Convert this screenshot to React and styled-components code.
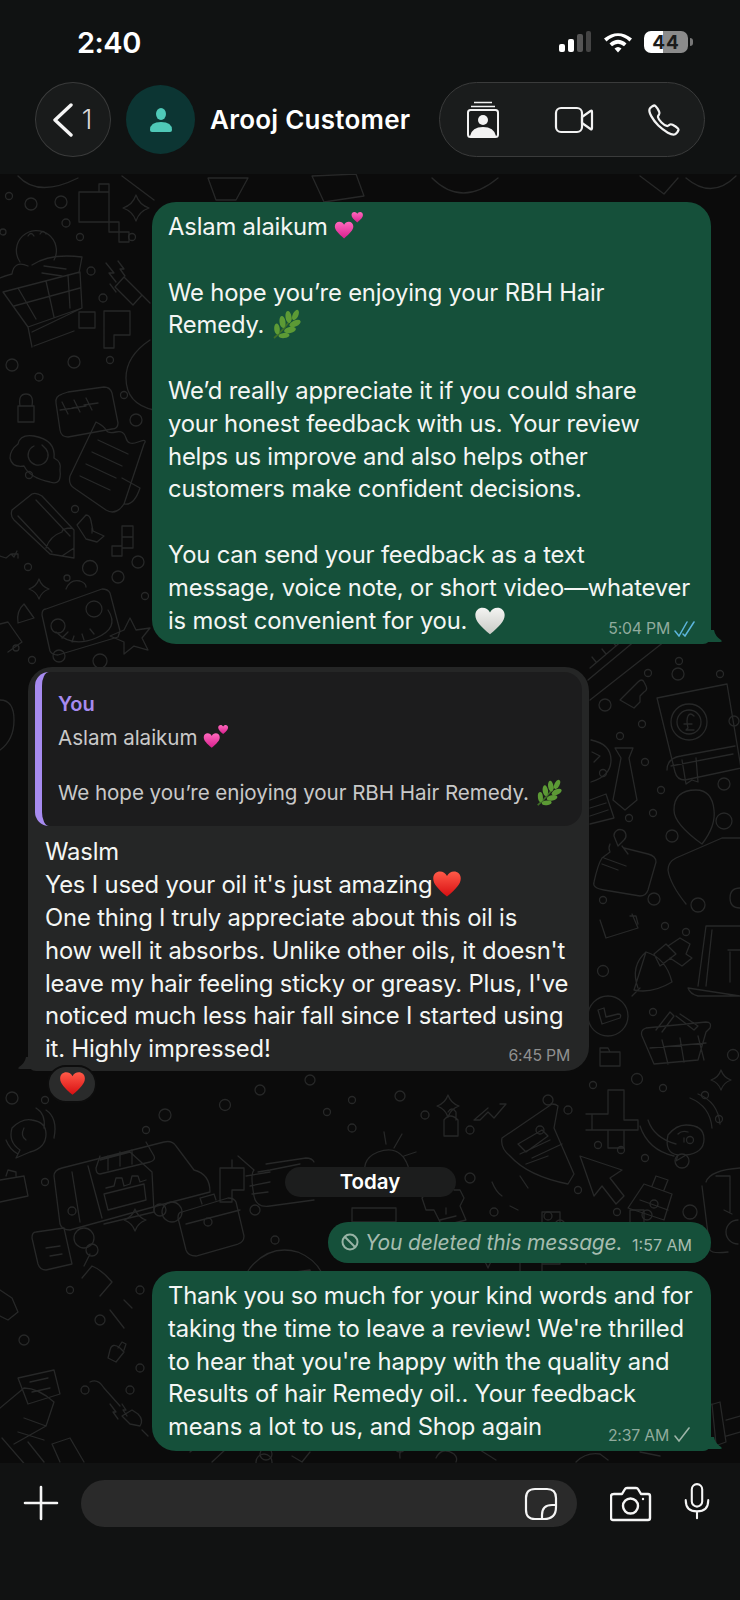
import React from 'react';
import styled, { createGlobalStyle } from 'styled-components';
import { IoCallOutline } from 'react-icons/io5';

const GlobalStyle = createGlobalStyle`
  html, body {
    margin: 0;
    padding: 0;
    background: #0b0b0b;
  }
  * {
    box-sizing: border-box;
  }
`;

const FONT = `Inter, "Liberation Sans", sans-serif`;

const FIRST_MESSAGE = [
  ['Aslam alaikum ', 'hearts'],
  [''],
  ['We hope you’re enjoying your RBH Hair'],
  ['Remedy. ', 'herb'],
  [''],
  ['We’d really appreciate it if you could share'],
  ['your honest feedback with us. Your review'],
  ['helps us improve and also helps other'],
  ['customers make confident decisions.'],
  [''],
  ['You can send your feedback as a text'],
  ['message, voice note, or short video—whatever'],
  ['is most convenient for you. ', 'white'],
];

const REPLY = [
  ['Waslm'],
  ["Yes I used your oil it's just amazing", 'red'],
  ['One thing I truly appreciate about this oil is'],
  ["how well it absorbs. Unlike other oils, it doesn't"],
  ["leave my hair feeling sticky or greasy. Plus, I've"],
  ['noticed much less hair fall since I started using'],
  ['it. Highly impressed!'],
];

const THANKS = [
  ['Thank you so much for your kind words and for'],
  ["taking the time to leave a review! We're thrilled"],
  ["to hear that you're happy with the quality and"],
  ['Results of hair Remedy oil.. Your feedback'],
  ['means a lot to us, and Shop again'],
];

// wallpaper, in page coordinates
const star = (x, y, r) =>
  `M${x} ${y - r}Q${x + r * 0.25} ${y - r * 0.25} ${x + r} ${y}Q${x + r * 0.25} ${y + r * 0.25} ${x} ${y + r}Q${x - r * 0.25} ${y + r * 0.25} ${x - r} ${y}Q${x - r * 0.25} ${y - r * 0.25} ${x} ${y - r}Z`;

const DOODLES = [
  // top strip
  'M18 176q20 22 60 2M122 176l32 24M208 178h40l-12 22h-20zM312 176l44 -2 8 22-40 6zM432 178q30 30 66 0M640 176l24 18 14-16M686 178q26 22 50-2',
  // cart and smiley
  'M20 262a20 20 0 1 1 34 -2M28 236q3-5 6 0M40 234q3-5 6 0M3 292L80 272l2 36-54 19zM18 288l18 31M46 281l8 36M68 275l2 33M14 306l66-18M28 327l4 20M82 308l-50 24M34 346l40-15',
  'M32 265q18-12 50-8l-3 16M44 266l22 3M42 273l20 3M28 266q-14-6-16 8q-8 2-12 4',
  // tokens around the cart
  'M106 263l8 10-5 0 7 9M118 261l6 8-4 0 5 7M110 284l6 8M124 277l18 18-9 10-18-18zM142 295l8 8',
  'M79 312h16v16h-16zM104 311h26v24h-16v13h-10z',
  'M79 192h30v30h-30zM109 192h-10v-8h10zM109 222h10v10h-10zM109 232h10v10h10v-10h-10z',
  star(136, 208, 13),
  'M150 340q-24 16-24 38q0 26 28 32',
  // password
  'M68 392l36-5q6 0 8 6l6 30q0 6-6 6l-44 8q-7 0-8-7l-4-27q-1-7 6-9z',
  'M62 402l6 12M74 400l6 12M86 398l6 12M60 410l14-2M72 408l14-2M84 405l14-2',
  'M18 406h16v16h-16zM20 406q-2-12 6-12t6 12',
  // cloud and receipt
  'M18 444q-8 6-8 14q2 10 14 8q6 12 26 16q12 4 10-12q2-8-6-12q2-18-20-22q-14-2-16 8z',
  'M34 446a10 10 0 1 0 12 3l-4-4',
  'M96 422q8 4 10 8t10 2 10 6 12 4 6 2L124 504q-8 12-18 6L74 488q-6-4-4-12zM98 440l30 14M92 452l30 14M86 464l30 14M80 476l30 14M124 504q10 2 16-16l-18-10',
  // pencil
  'M12 510l20-16q4-2 10 2l32 34 0 28-24-4-36-34q-4-4-2-10zM18 516l34 36M36 500l34 36M46 548q4-12 16-16 0-4 10-4M62 556l12-8',
  'M86 515q4 0 5 6l2 10 11 5-7 6-11-3-9-14zM92 528l0 5',
  'M122 526h11v11h-11zM122 537h11v11h-11zM112 546h10v10h-10z',
  'M0 556l6 2 5-4 3 3 3-6M12 554h6v4',
  star(39, 589, 10),
  'M24 604l10 14-16 5q-2-12 6-19z',
  // robot
  'M46 609l56-20q6 0 8 4l10 38-2 6-60 18q-6 0-8-4l-8-36q0-6 4-6zM66 589q4-10 14-8q6 2 6 6',
  'M58 626m-7 0a7 7 0 1 0 14 0a7 7 0 1 0-14 0M94 609m-8 0a8 8 0 1 0 16 0a8 8 0 1 0-16 0M56 632q16 16 40 6t12-28M62 638l6-6M72 642l2-6M84 640l-2-6M94 634l-4-5',
  'M130 618l6 12 14-2-8 10 6 12-14-4-10 8 0-12-14-6 14-6z',
  // lower-left edge
  'M0 624l8-2 14 20-14 10M0 700q14 0 14 20t-14 30',
  // ruler and diagonal
  'M590 668l40-34M588 680l60-50M596 662l-4-5M606 654l-4-5M616 646l-4-5M626 638l-4-5M590 700l84-66',
  'M630 690l8-8q4-4 6 0l2 4q2 4-2 6l-4 4 0 6-6 6-14-8 6-6z',
  // book
  'M657 698l70-14 14 84-56 12q-8 0-10-8zM667 770q0-12 14-14l54-10M671 766l62-12M682 760l4 24 6-4 6 2-2-24',
  'M689 722m-18 0a18 18 0 1 0 36 0a18 18 0 1 0-36 0M689 722m-12 0a12 12 0 1 0 24 0a12 12 0 1 0-24 0M694 716q-4-4-6 0t0 12l-2 2h8M684 724h8',
  // tie
  'M615 748h18l-4 10 8 42-12 10-12-10 8-42z',
  'M592 740l-1 0q20 4 20 20t-20 22M592 752l8 4-6 6',
  'M590 800l16-6 8 24-24 6M590 808l16-5M590 816l18-6',
  // pin
  'M696 790q-22 0-22 20q0 14 28 34q14-18 12-34q-2-20-18-20z',
  // bottle note
  'M610 844q-2 4 0 8l-8 6q-4 6-8 24q-2 6 10 8l36 6q6 0 8-6l8-28q0-6-8-8l-24-6M614 836a6 6 0 1 1 10 4l-6 6zM622 846l6 8M604 858l22 8M602 864l16 6',
  // frame at right
  'M740 838l-18 0-46 20q-8 4-8 12q2 14 18 34M698 905m-7 0a7 7 0 1 0 14 0a7 7 0 1 0-14 0',
  'M740 888q-10 0-10 10t10 10',
  // folder corner
  'M600 920l6 18 32-10-6-14M630 916l6 0 2 8',
  // corn
  'M632 996l8-8M634 990l12-38q20 6 26 30q-20 12-38 8zM646 952q-16 14-8 36M660 966l16-12-10-10-12 10zM668 946l12-8 10 6-4 10 6 4-10 8-12-8',
  // laptop
  'M698 986l8-60h34M712 930l-6 56M688 988l52 8M688 988q2 6 10 8h42M728 950h12M730 952v30',
  // tick circle
  'M608 1016m-20 0a20 20 0 1 0 40 0a20 20 0 1 0-40 0M598 1010l4 14 18-6q2-4-2-4l-12 3-2-9z',
  // basket
  'M642 1036q-2-6 4-8l60-6q6 0 4 6l-4 4-8 28-44 4zM656 1030l14-18 4 4-12 16M680 1014l18 12-4 4-18-14M662 1040l6 24M680 1038l4 24M698 1036l6 24M650 1048l56-5',
  'M600 1052h20v14h-20zM600 1052v-4h8l2 4',
  star(721, 1080, 10),
  // cross blocks
  'M608 1090h16v30h14v10h-14v18h-16v-18h-16v-16h16zM586 1114h22M586 1130h40',
  // sound bubble
  'M668 1135q8-10 18-10 18 0 18 14 0 14-18 16l-10 6 2-6q-14-2-10-20zM684 1138v4M678 1134q4-4 10-2M648 1120q6 18 28 24M640 1126q8 24 34 30M690 1098q20 8 22 30M698 1094q20 8 22 30',
  // van at right edge
  'M706 1182q4-12 34-14M702 1186l8 64q2 4 18 2M716 1176l14 0M730 1176v36M724 1210l8 4',
  'M738 1220a12 12 0 0 0 0 24',
  // arrow cursor
  'M580 1156l42 14-12 8 14 18-8 8-14-18-8 10z',
  // case
  'M644 1184l28 10-8 26-36-12zM652 1186l4-10 12 4-4 10M640 1200l28 10M654 1204m-4 0a4 4 0 1 0 8 0a4 4 0 1 0-8 0',
  // truck
  'M62 1168l102-26q8-2 12 4l18 24q16 4 16 22l-46 12-94 26q-8 0-10-6l-6-48q0-6 8-8zM72 1172l8 50M88 1166l14 52M100 1160l30-8 22 20 2 40-50 12',
  'M100 1156l-4 12q0 6 4 6l50-12q6-2 4-6l-8-14M108 1156v14M120 1152v14M132 1150v14M106 1188l8-2 2-8 6 0 2 8 6-2 2-8 6 0 2 6 6-2M104 1194l40-10 2 16-38 10z',
  'M84 1238m-10 0a10 10 0 1 0 20 0a10 10 0 1 0-20 0M172 1212m-10 0a10 10 0 1 0 20 0a10 10 0 1 0-20 0',
  // talking bubble left
  'M12 1128q10-10 20-8 14 2 14 14 0 14-16 18l-14 6 4-8q-12-8-8-22zM24 1128q-4 8 2 12M46 1110q12 8 8 28M36 1108q10 6 8 20M6 1140q4 10 12 14',
  'M0 1180l24-4 4 20-28 6M6 1176l2-6 8 2 0 4',
  star(135, 1220, 11),
  // case centre
  'M182 1212l46-14q6 0 8 4l8 34q0 6-6 8l-42 12q-8 0-10-6l-8-32q0-6 4-6zM202 1204l-2-6 14-4 2 6M186 1224l54-14M208 1222m-4 0a4 4 0 1 0 8 0a4 4 0 1 0-8 0',
  // note, cards
  'M36 1232l28-4 8 36-26 6q-6 0-8-6l-6-26q0-6 4-6zM46 1248l14-2M50 1256l12-2M92 1250m-6 0a6 6 0 1 0 12 0a6 6 0 1 0-12 0M90 1254l-6 12',
  'M266 1164l40-6q6 0 8 4M238 1156l16 14q-4 4 0 26q2 12 16 10l44-6M258 1172l12-2 30-6M246 1176l24-4M250 1186l20-4M252 1194l16-2',
  'M368 1182q-10-22 10-30 22-8 30 14l2 12M394 1148l8-14M404 1156l12-4M386 1144l-2-12',
  'M352 1208h44l0 14h-44zM352 1222h44v14h-44M352 1236h44',
  // shop front
  'M246 1304q-10-16 4-36 20-24 48-16 24 10 28 34t-14 34M266 1276l44 -6 4 14q-4 6-10 2-4 6-10 2-4 6-10 2-4 6-10 2-6 2-8-8zM276 1294v26M302 1288v26',
  'M502 1138l50-34q4 0 6 2l-4 22 20 46-6 10q-40-8-58-28-10-8-8-18zM518 1144l24-14 6 6-22 16zM520 1154l30-14M532 1158l30-14M526 1164l22-8',
  'M220 1168h24v22h-12v12h-12zM232 1160v8',
  'M296 1190h18v-12',
  'M444 1120q6-8 14 0v16h-14zM448 1112q4-6 8 0v8',
  'M488 1108l-14 12 6 0 8-8 6 6 12-14h-6',
  star(448, 1106, 11),
  star(488, 1256, 12),
  star(615, 1274, 2),
  'M520 1232h22v-20h18v20h18v16h-18v16h-18v-16h-22zM520 1262h22v14h-22z',
  'M586 1236l-6 14 6 14M614 1240h20v20h-20zM630 1210h14v14h-14z',
  'M430 1188l20-6 4 8 6 0 4 8-4 8 6 14-24 6-8-16-8 0-4-12zM446 1208v6M440 1220l16-4',
  'M492 1182q4 10 10 14M520 1176l8 12M510 1206l8 4',
  // bottom strip
  'M0 1408l24-20q14 0 30 14l-8 24-32 18M24 1418l22 8M18 1432l26 8M2 1438l26 30M28 1442l16 20M60 1462l-8-18 18-6 14 24',
  'M110 1404l6 8-3 0 5 7M122 1404l4 6-3 0 4 6M130 1424l-8-8 10-6 6 4q6 6 2 12zM142 1430l6 6',
  'M190 1452q18-14 36-18M212 1462l30-28M264 1462m-8 0a8 8 0 1 0 16 0a8 8 0 1 0-16 0M292 1456l10 6 8-10',
  'M400 1458q-2-14 14-10M436 1458q6-12 18-4 4 4 2 8M480 1450l16 10',
  'M576 1462q10-10 24-8l8 6M640 1452l20 4M700 1408l20-6 6 40-22 8zM712 1404l4 40M726 1420l14-4M726 1436l14-4',
  'M0 1290l12 8 6 14-10 8-8-4M18 1378l36-8 6 24-32 10zM30 1382l18-4M32 1392l18-4',
  'M82 1278l10-12q10 4 20 16l-12 14M110 1310l14 18M124 1300l8 8',
  'M120 1348q-8-6-10 2l-2 8 8 4 8-10zM118 1348l4-6 4 2-2 6',
  'M90 1382q8-4 14 6l16 18',
];

const RINGS = [
  [9, 196, 3.5], [31, 204, 6], [61, 202, 6], [66, 223, 4], [3, 232, 3], [132, 237, 3.5], [80, 237, 3.5],
  [91, 271, 4], [103, 298, 4], [12, 365, 6], [39, 377, 4], [74, 362, 6], [110, 360, 3.5], [124, 395, 3.5],
  [136, 420, 6], [29, 475, 3.5], [75, 509, 3.5], [28, 567, 3.5], [90, 568, 7.5], [118, 577, 6], [138, 562, 6],
  [67, 578, 3], [145, 596, 3.5], [59, 656, 6], [32, 660, 3.5], [100, 661, 7], [35, 688, 3], [16, 648, 3],
  [605, 705, 6], [678, 674, 6], [720, 674, 3.5], [648, 673, 3.5], [679, 661, 3.5], [642, 724, 3.5], [620, 736, 3.5],
  [645, 762, 3.5], [603, 773, 3.5], [661, 790, 3.5], [653, 813, 3.5], [629, 818, 3.5], [724, 784, 6], [724, 821, 8],
  [672, 836, 6], [603, 900, 3.5], [654, 899, 6], [734, 721, 5], [665, 926, 3.5], [686, 932, 3.5], [603, 971, 5.5],
  [653, 1012, 3.5], [733, 1055, 5.5], [637, 1079, 5.5], [663, 1088, 3.5], [593, 1085, 3.5], [705, 1095, 3.5],
  [719, 1119, 3.5], [690, 1140, 3.5], [598, 1145, 3.5], [621, 1150, 3.5], [645, 1158, 3.5], [682, 1161, 7],
  [690, 1212, 7], [647, 1215, 5], [617, 1212, 3.5], [12, 1098, 6], [45, 1100, 3.5], [146, 1130, 3.5], [165, 1115, 6],
  [225, 1105, 5.5], [260, 1090, 5], [310, 1080, 5], [425, 1115, 4], [400, 1096, 5], [352, 1128, 4], [327, 1112, 3.5],
  [352, 1100, 3.5], [45, 1182, 3.5], [72, 1211, 4], [160, 1210, 6], [275, 1240, 4], [255, 1210, 5], [420, 1228, 4],
  [435, 1180, 4], [470, 1178, 5], [470, 1130, 4], [540, 1130, 4], [548, 1100, 5], [568, 1110, 4], [560, 1225, 5],
  [548, 1216, 4], [578, 1190, 3.5], [494, 1212, 4], [100, 1320, 5], [70, 1290, 3.5], [24, 1340, 5], [140, 1290, 4],
  [85, 1390, 4], [130, 1390, 4], [140, 1368, 4], [174, 1427, 4], [266, 1454, 6], [400, 1446, 6], [570, 1442, 6],
];

const DoodleLayer = styled.svg`
  position: absolute;
  inset: 0;
  width: 100%;
  height: 100%;
  fill: none;
  stroke: #272828;
  stroke-width: 1.3;
  stroke-linecap: round;
  stroke-linejoin: round;
`;

const Wallpaper = () => (
  <DoodleLayer viewBox="0 174 740 1289" aria-hidden="true">
    {DOODLES.map((d) => (
      <path key={d} d={d} />
    ))}
    {RINGS.map(([x, y, r]) => (
      <circle key={`${x}-${y}`} cx={x} cy={y} r={r} />
    ))}
  </DoodleLayer>
);

const Emoji = styled.svg`
  display: inline-block;
  width: ${(props) => props.$size}px;
  height: ${(props) => props.$size}px;
  vertical-align: ${(props) => props.$drop || -6}px;
`;

const HEART = 'M12 22C5 16 1 12 1 7.500 1 4 3.600 2 6.400 2 8.800 2 11 3.400 12 5.600 13 3.400 15.200 2 17.600 2 20.400 2 23 4 23 7.500 23 12 19 16 12 22Z';

const HeartEmoji = ({ id, from, to, size, drop }) => (
  <Emoji viewBox="0 0 24 24" $size={size} $drop={drop}>
    <defs>
      <linearGradient id={id} x1="0" y1="0" x2="0" y2="1">
        <stop offset="0" stopColor={from} />
        <stop offset="1" stopColor={to} />
      </linearGradient>
    </defs>
    <path d={HEART} fill={`url(#${id})`} />
  </Emoji>
);

const TwoHearts = ({ id, size, drop }) => (
  <Emoji viewBox="0 0 30 30" $size={size} $drop={drop}>
    <defs>
      <linearGradient id={id} x1="0" y1="0" x2="0" y2="1">
        <stop offset="0" stopColor="#ff69bd" />
        <stop offset="1" stopColor="#d81f8e" />
      </linearGradient>
    </defs>
    <path transform="translate(0 9) scale(0.84)" d={HEART} fill={`url(#${id})`} />
    <path transform="translate(17 0) scale(0.52)" d={HEART} fill={`url(#${id})`} />
  </Emoji>
);

const Herb = ({ size, drop }) => (
  <Emoji viewBox="0 0 30 30" $size={size} $drop={drop}>
    <path d="M3 29Q12 22 24 5" stroke="#3f6f27" strokeWidth="1.800" fill="none" />
    <g fill="#5c9a35">
      <ellipse cx="24.500" cy="6" rx="2.800" ry="5.500" transform="rotate(25 24.500 6)" />
      <ellipse cx="17.500" cy="8" rx="3" ry="6" transform="rotate(-8 17.500 8)" />
      <ellipse cx="24" cy="14.500" rx="3" ry="6" transform="rotate(65 24 14.500)" />
      <ellipse cx="11.500" cy="13" rx="3" ry="6" transform="rotate(-8 11.500 13)" />
      <ellipse cx="19" cy="21" rx="3" ry="6" transform="rotate(78 19 21)" />
      <ellipse cx="6" cy="20" rx="2.800" ry="5.500" transform="rotate(-5 6 20)" />
      <ellipse cx="13" cy="26.500" rx="2.600" ry="5.500" transform="rotate(84 13 26.500)" />
    </g>
  </Emoji>
);

const renderEmoji = (name, key) => {
  if (name === 'hearts') return <TwoHearts id={`hearts-${key}`} size={30} drop={-6} />;
  if (name === 'herb') return <Herb size={30} drop={-6} />;
  if (name === 'white') return <HeartEmoji id="white-heart" from="#f4f4f2" to="#c9cac5" size={32} drop={-8} />;
  if (name === 'red') return <HeartEmoji id="red-heart" from="#ff5a48" to="#d80f12" size={30} drop={-6} />;
  return null;
};

const TextBlock = ({ lines, prefix }) => (
  <BodyText>
    {lines.map(([text, emoji], i) => (
      <TextLine key={`${prefix}-${i}`}>
        {text}
        {emoji && renderEmoji(emoji, `${prefix}-${i}`)}
      </TextLine>
    ))}
  </BodyText>
);

const Status = () => (
  <StatusRight>
    <svg width="34" height="22" viewBox="0 0 34 22">
      <rect x="1" y="13" width="6" height="8" rx="2" fill="#fff" />
      <rect x="10" y="8" width="6" height="13" rx="2" fill="#fff" />
      <rect x="19" y="3" width="6" height="18" rx="2" fill="#555" />
      <rect x="28" y="0" width="5" height="21" rx="2" fill="#444" />
    </svg>
    <svg width="30" height="22" viewBox="0 0 30 22">
      <path d="M1 7.500Q15-3 29 7.500l-2.500 3Q15-.5 3.500 10.500Z" fill="#fff" />
      <path d="M6.500 12.500Q15 5 23.500 12.500L21 15.300Q15 10 9 15.300Z" fill="#fff" />
      <path d="M11.500 17.500Q15 14.300 18.500 17.500L15 21.500Z" fill="#fff" />
    </svg>
    <Battery>44</Battery>
    <BatteryNub />
  </StatusRight>
);

const ContactIcon = () => (
  <svg width="36" height="38" viewBox="0 0 36 38" fill="none" stroke="#f2f2f2" strokeWidth="2">
    <path d="M9 1.500h18M6 5.500h24" strokeWidth="1.600" />
    <rect x="3" y="9" width="30" height="27" rx="2.500" />
    <circle cx="18" cy="19" r="5" fill="#f2f2f2" stroke="none" />
    <path d="M5 35q2-9 13-9t13 9z" fill="#f2f2f2" stroke="none" />
  </svg>
);

const VideoIcon = () => (
  <svg width="40" height="30" viewBox="0 0 40 30" fill="none" stroke="#f2f2f2" strokeWidth="2.200" strokeLinejoin="round">
    <rect x="2" y="3" width="26" height="24" rx="5" />
    <path d="M28 12l8.500-6q1.500-1 1.500 1v16q0 2-1.500 1L28 18z" />
  </svg>
);

const StickerIcon = () => (
  <svg width="34" height="34" viewBox="0 0 34 34" fill="none" stroke="#f5f5f5" strokeWidth="2.200" strokeLinejoin="round">
    <path d="M11 2h12q9 0 9 9v9q0 12-12 12h-9q-9 0-9-9V11q0-9 9-9z" />
    <path d="M32 18h-4q-10 0-10 10v4" />
  </svg>
);

const CameraIcon = () => (
  <svg width="42" height="36" viewBox="0 0 42 36" fill="none" stroke="#f5f5f5" strokeWidth="2.400" strokeLinejoin="round">
    <path d="M4 8h8l3-5q.5-1 2-1h9q1.500 0 2 1l3 5h7q2 0 2 2v22q0 2-2 2H3q-2 0-2-2V10q0-2 3-2z" />
    <circle cx="20.500" cy="20" r="7.500" />
    <circle cx="33" cy="13" r="1.200" fill="#f5f5f5" stroke="none" />
  </svg>
);

const MicIcon = () => (
  <svg width="30" height="42" viewBox="0 0 30 42" fill="none" stroke="#f5f5f5" strokeWidth="2.400" strokeLinecap="round">
    <rect x="9" y="1.500" width="12" height="26" rx="6" />
    <path d="M2 20q0 13 13 13t13-13M15 33v8" />
  </svg>
);

const Tail = ({ left }) =>
  left ? (
    <TailLeft viewBox="0 0 14 14">
      <path d="M14 0v12H2q-3 0-1-2 6-4 7-10z" fill="#252626" />
    </TailLeft>
  ) : (
    <TailRight viewBox="0 0 14 14">
      <path d="M0 0v12h12q3 0 1-2Q7 6 6 0z" fill="#15503a" />
    </TailRight>
  );

const App = () => (
  <Page>
    <GlobalStyle />
    <Header>
      <StatusBar>
        <Clock>2:40</Clock>
        <Status />
      </StatusBar>
      <NavRow>
        <BackButton>
          <svg width="22" height="34" viewBox="0 0 22 34" fill="none" stroke="#f5f5f5" strokeWidth="3.400" strokeLinecap="round" strokeLinejoin="round">
            <path d="M19 2L3 17l16 15" />
          </svg>
          <BackCount>1</BackCount>
        </BackButton>
        <Avatar>
          <svg width="22" height="24" viewBox="0 0 22 24" fill="#4fc9b8">
            <ellipse cx="11" cy="6" rx="5" ry="6" />
            <path d="M0 22q0-8 11-8t11 8q0 2-2 2H2q-2 0-2-2z" />
          </svg>
        </Avatar>
        <ContactName>Arooj Customer</ContactName>
        <ActionPill>
          <ContactIcon />
          <VideoIcon />
          <IoCallOutline size={36} color="#f2f2f2" />
        </ActionPill>
      </NavRow>
    </Header>

    <Chat>
      <Wallpaper />
      <Messages>
        <Outgoing>
          <TextBlock lines={FIRST_MESSAGE} prefix="first" />
          <Meta>
            <MetaTime>5:04 PM</MetaTime>
            <svg width="22" height="16" viewBox="0 0 22 16" fill="none" stroke="#5cb5dc" strokeWidth="1.500" strokeLinecap="round">
              <path d="M1 10l4 5L13 1M9 13l2 2L20 1" />
            </svg>
          </Meta>
          <Tail />
        </Outgoing>

        <Incoming>
          <Quote>
            <QuoteAuthor>You</QuoteAuthor>
            <QuoteLine>
              Aslam alaikum <TwoHearts id="hearts-quote" size={26} drop={-5} />
            </QuoteLine>
            <QuoteLine $gap>
              We hope you’re enjoying your RBH Hair Remedy. <Herb size={27} drop={-6} />
            </QuoteLine>
          </Quote>
          <TextBlock lines={REPLY} prefix="reply" />
          <Meta $inset={19}>
            <MetaTime $grey>6:45 PM</MetaTime>
          </Meta>
          <Tail left />
          <Reaction>
            <HeartEmoji id="red-reaction" from="#ff5a48" to="#d80f12" size={27} drop={0} />
          </Reaction>
        </Incoming>

        <DayChip>Today</DayChip>

        <DeletedBubble>
          <svg width="18" height="18" viewBox="0 0 18 18" fill="none" stroke="#98b3a5" strokeWidth="2">
            <circle cx="9" cy="9" r="7.500" />
            <path d="M3.500 3.500l11 11" />
          </svg>
          <DeletedText>You deleted this message.</DeletedText>
          <DeletedTime>1:57 AM</DeletedTime>
        </DeletedBubble>

        <Outgoing $close>
          <TextBlock lines={THANKS} prefix="thanks" />
          <Meta $inset={20}>
            <MetaTime>2:37 AM</MetaTime>
            <svg width="18" height="16" viewBox="0 0 18 16" fill="none" stroke="#9db4a8" strokeWidth="1.600" strokeLinecap="round">
              <path d="M2 9l4 5L16 1" />
            </svg>
          </Meta>
          <Tail />
        </Outgoing>
      </Messages>
    </Chat>

    <Footer>
      <PlusIcon viewBox="0 0 36 36" fill="none" stroke="#f5f5f5" strokeWidth="2.600" strokeLinecap="round">
        <path d="M18 2v32M2 18h32" />
      </PlusIcon>
      <InputBar>
        <StickerIcon />
      </InputBar>
      <CameraSlot>
        <CameraIcon />
      </CameraSlot>
      <MicIcon />
    </Footer>
  </Page>
);

export default App;

const Page = styled.div`
  width: 740px;
  height: 1600px;
  display: flex;
  flex-direction: column;
  overflow: hidden;
  font-family: ${FONT};
  color: #f5f5f5;
  background: #0b0b0b;
`;

const Header = styled.header`
  height: 174px;
  flex: none;
  background: #101212;
  padding: 24px 35px 0;
`;

const StatusBar = styled.div`
  display: flex;
  align-items: center;
  justify-content: space-between;
  height: 36px;
  padding: 0 12px 0 42px;
`;

const Clock = styled.span`
  font-size: 29px;
  font-weight: 600;
  letter-spacing: -0.5px;
  color: #fff;
`;

const StatusRight = styled.div`
  display: flex;
  align-items: center;
  gap: 11px;
`;

const Battery = styled.span`
  width: 44px;
  height: 22px;
  border-radius: 7px;
  display: flex;
  align-items: center;
  justify-content: center;
  font-size: 19px;
  font-weight: 700;
  letter-spacing: 1px;
  color: #1b1b1b;
  background: linear-gradient(90deg, #fff 43%, #8b8b8b 43%);
`;

const BatteryNub = styled.span`
  width: 3px;
  height: 8px;
  margin-left: -9px;
  border-radius: 0 3px 3px 0;
  background: #777;
`;

const NavRow = styled.div`
  display: flex;
  align-items: center;
  margin-top: 22px;
  height: 75px;
`;

const BackButton = styled.div`
  width: 76px;
  height: 75px;
  flex: none;
  border-radius: 50%;
  display: flex;
  align-items: center;
  justify-content: center;
  gap: 8px;
  padding-right: 2px;
  background: #191b1b;
  border: 1.5px solid #3a3b3b;
`;

const BackCount = styled.span`
  font-size: 27px;
  font-weight: 300;
  color: #d8d8d8;
`;

const Avatar = styled.div`
  width: 69px;
  height: 69px;
  flex: none;
  margin-left: 15px;
  border-radius: 50%;
  display: flex;
  align-items: center;
  justify-content: center;
  background: #0c3533;
`;

const ContactName = styled.span`
  margin-left: 15px;
  font-size: 26px;
  font-weight: 600;
  letter-spacing: 0.25px;
  color: #fff;
  white-space: nowrap;
`;

const ActionPill = styled.div`
  width: 266px;
  height: 75px;
  margin-left: auto;
  flex: none;
  border-radius: 38px;
  display: flex;
  align-items: center;
  justify-content: space-between;
  padding: 0 22px 0 25px;
  background: #1a1c1c;
  border: 1.5px solid #3a3b3b;
`;

const Chat = styled.main`
  position: relative;
  flex: 1;
  min-height: 0;
  overflow: hidden;
  background: #0b0b0b;
`;

const Messages = styled.div`
  position: relative;
  display: flex;
  flex-direction: column;
  padding: 28px 29px 0 28px;
`;

const Bubble = styled.div`
  position: relative;
  width: ${(props) => props.$width || 559}px;
  border-radius: 24px;
`;

const Outgoing = styled(Bubble)`
  align-self: flex-end;
  margin-top: ${(props) => (props.$close ? '8px' : '0')};
  padding: 9px 16px 7px;
  background: #15503a;
  border-bottom-right-radius: 8px;
`;

const Incoming = styled(Bubble)`
  align-self: flex-start;
  margin-top: 23px;
  width: 561px;
  padding: 5px 7px 5px;
  background: #252626;
  border-bottom-left-radius: 8px;
`;

const BodyText = styled.div`
  font-size: 23.800px;
  line-height: 32.800px;
  letter-spacing: -0.17px;
  color: #f4f6f4;
  white-space: pre;
  ${Incoming} & {
    padding: 10px 0 0 10px;
  }
`;

const TextLine = styled.div`
  height: 32.800px;
`;

const Meta = styled.div`
  position: absolute;
  right: ${(props) => props.$inset || 15}px;
  bottom: 6px;
  display: flex;
  align-items: center;
  gap: 4px;
`;

const MetaTime = styled.span`
  font-size: 15.800px;
  letter-spacing: -0.2px;
  color: ${(props) => (props.$grey ? '#8f9090' : '#90ab9d')};
`;

const TailRight = styled.svg`
  position: absolute;
  right: -11px;
  bottom: 0;
  width: 14px;
  height: 14px;
`;

const TailLeft = styled.svg`
  position: absolute;
  left: -10px;
  bottom: 0;
  width: 14px;
  height: 14px;
`;

const Quote = styled.div`
  height: 154px;
  padding: 19px 14px 0 16px;
  border-left: 7px solid #a78bf0;
  border-radius: 14px 18px 18px 14px;
  background: #1c1c1d;
`;

const QuoteAuthor = styled.div`
  font-size: 20px;
  font-weight: 600;
  line-height: 26px;
  color: #a78bf0;
`;

const QuoteLine = styled.div`
  margin-top: ${(props) => (props.$gap ? '25px' : '6px')};
  font-size: 20.600px;
  line-height: 30px;
  letter-spacing: -0.05px;
  white-space: nowrap;
  color: #c9c9c9;
`;

const Reaction = styled.div`
  position: absolute;
  left: 19px;
  bottom: -32px;
  width: 50px;
  height: 38px;
  border-radius: 19px;
  display: flex;
  align-items: center;
  justify-content: center;
  background: #2a2b2b;
  border: 2px solid #0d0d0d;
`;

const DayChip = styled.div`
  align-self: center;
  margin: 96px 0 25px 1px;
  width: 171px;
  height: 30px;
  border-radius: 15px;
  display: flex;
  align-items: center;
  justify-content: center;
  font-size: 20.500px;
  font-weight: 600;
  color: #fff;
  background: #1c1d1d;
`;

const DeletedBubble = styled.div`
  align-self: flex-end;
  width: 383px;
  height: 41px;
  display: flex;
  align-items: center;
  padding: 0 19px 0 13px;
  border-radius: 20px;
  background: #15503a;
`;

const DeletedText = styled.span`
  margin-left: 6px;
  font-size: 21px;
  font-style: italic;
  letter-spacing: -0.15px;
  white-space: nowrap;
  color: #a6bcb0;
`;

const DeletedTime = styled.span`
  margin-left: auto;
  padding-top: 5px;
  font-size: 16px;
  color: #a6bcb0;
`;

const Footer = styled.footer`
  height: 137px;
  flex: none;
  display: flex;
  align-items: flex-start;
  padding: 17px 30px 0 23px;
  background: #111212;
`;

const PlusIcon = styled.svg`
  width: 36px;
  height: 36px;
  flex: none;
  margin-top: 5px;
`;

const InputBar = styled.div`
  width: 496px;
  height: 47px;
  margin-left: 22px;
  flex: none;
  display: flex;
  align-items: center;
  justify-content: flex-end;
  padding-right: 19px;
  border-radius: 24px;
  background: #2a2a2a;
`;

const CameraSlot = styled.div`
  margin: 6px 32px 0 33px;
  flex: none;
`;
